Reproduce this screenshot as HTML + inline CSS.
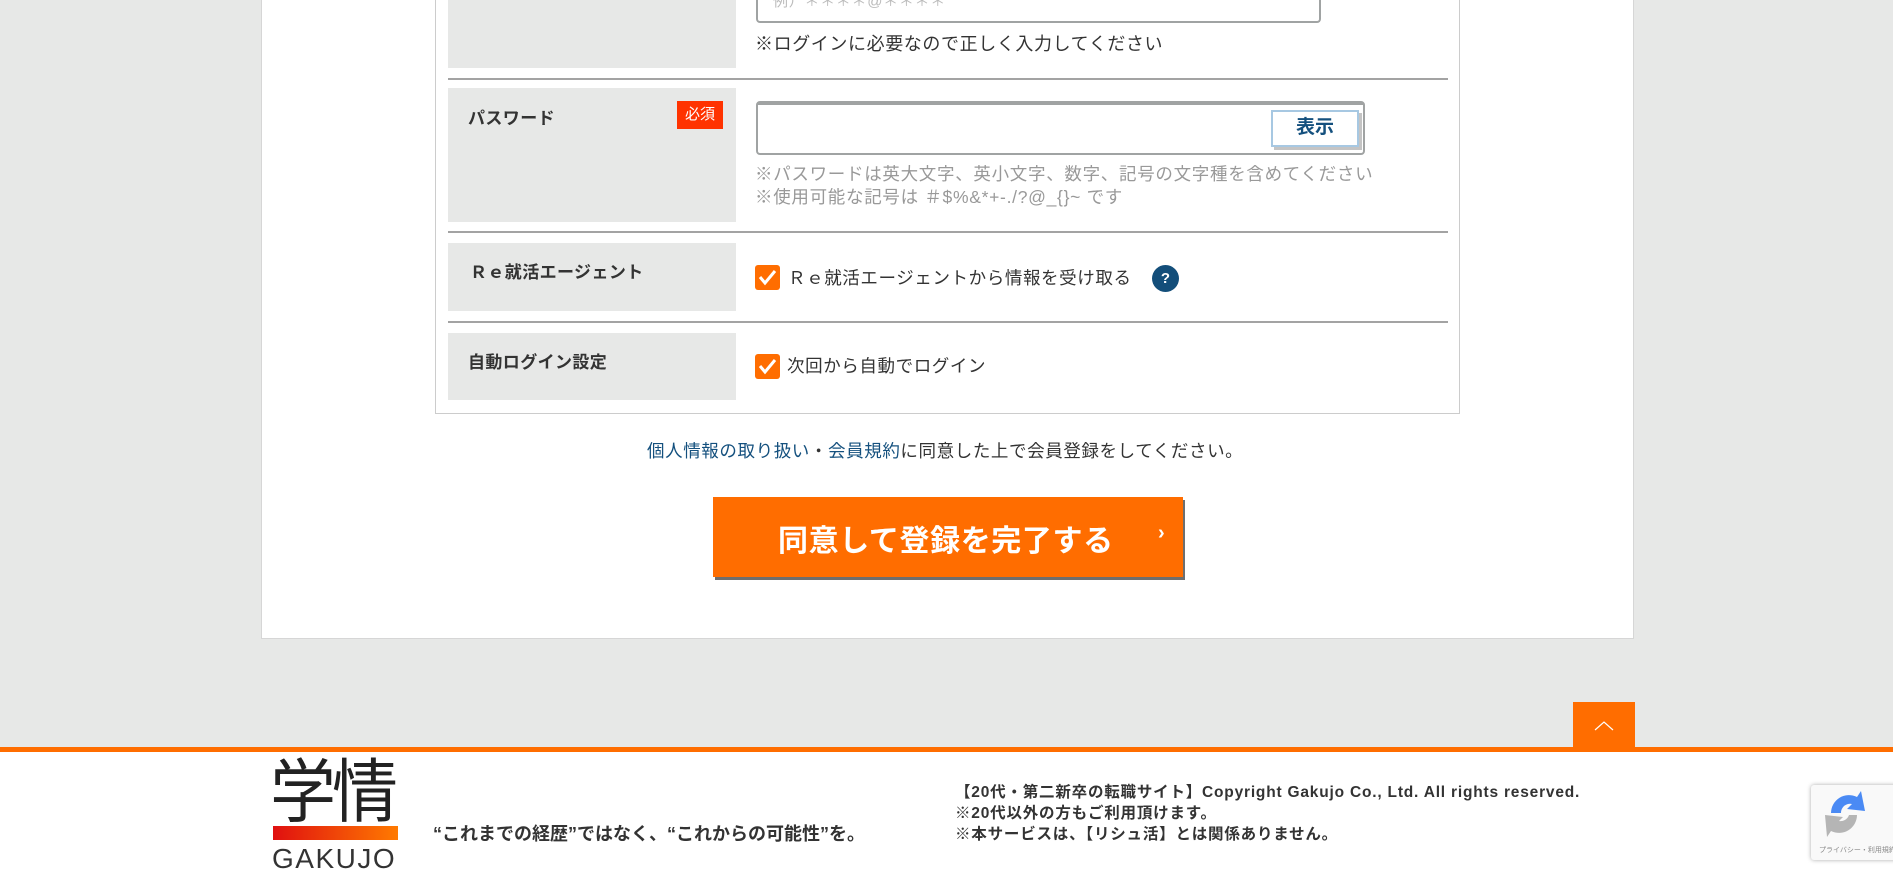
<!DOCTYPE html>
<html><head><meta charset="utf-8"><style>
*{margin:0;padding:0;box-sizing:border-box}
body{width:1893px;height:877px;overflow:hidden;background:#e7e8e7;font-family:"Liberation Sans","Noto Sans CJK JP",sans-serif;position:relative;color:#333}
.a{position:absolute}
.card{left:261px;top:-2px;width:1373px;height:641px;background:#fff;border:1px solid #d6d6d6;border-top:none}
.box{left:435px;top:-2px;width:1025px;height:416px;border:1px solid #ccc;border-top:none}
.lab{background:#e7e8e7;left:448px;width:288px}
.line{left:448px;width:1000px;height:2px;background:#a3a3a3}
.lt{font-size:17px;font-weight:bold;color:#333;letter-spacing:0.4px}
.t{font-size:18px;color:#333;white-space:nowrap;letter-spacing:0.6px}
.g{font-size:17.5px;color:#999;white-space:nowrap;letter-spacing:0.7px}
.cb{width:25px;height:25px;background:#ff6d00;border-radius:3px}
.cb svg{position:absolute;left:3px;top:4px}
</style></head><body>
<div class="a card"></div>
<div class="a box"></div>
<div class="a lab" style="top:0;height:68px"></div>
<div class="a" style="left:756px;top:-4px;width:565px;height:27px;border:2px solid #a0a3a3;border-top:none;border-radius:0 0 4px 4px"></div>
<div class="a g" style="left:773px;top:-10px;font-size:15px;color:#bbb">例）＊＊＊＊@＊＊＊＊</div>
<div class="a t" style="left:755px;top:30px">※ログインに必要なので正しく入力してください</div>
<div class="a line" style="top:78px"></div>

<div class="a lab" style="top:88px;height:134px"></div>
<div class="a lt" style="left:468px;top:104px">パスワード</div>
<div class="a" style="left:677px;top:101px;width:46px;height:28px;background:#ff3300;color:#fff;font-size:15px;text-align:center;line-height:28px">必須</div>
<div class="a" style="left:756px;top:101px;width:609px;height:54px;border:2px solid #a0a3a3;border-top-width:4px;border-radius:4px"></div>
<div class="a" style="left:1271px;top:110px;width:88px;height:37px;border:2px solid #a7c8e2;box-shadow:3px 3px 0 #c4c4c4;background:#fff;color:#14507e;font-weight:bold;font-size:19px;text-align:center;line-height:32px">表示</div>
<div class="a g" style="left:755px;top:161px">※パスワードは英大文字、英小文字、数字、記号の文字種を含めてください</div>
<div class="a g" style="left:755px;top:184px">※使用可能な記号は ＃$%&amp;*+-./?@_{}~ です</div>
<div class="a line" style="top:231px"></div>

<div class="a lab" style="top:243px;height:68px"></div>
<div class="a lt" style="left:470px;top:258px">Ｒｅ就活エージェント</div>
<div class="a cb" style="left:755px;top:265px"><svg width="19" height="17"><path d="M2 8 L7 14 L17 2" stroke="#fff" stroke-width="3" fill="none"/></svg></div>
<div class="a t" style="left:788px;top:265px;font-size:17.5px">Ｒｅ就活エージェントから情報を受け取る</div>
<div class="a" style="left:1152px;top:265px;width:27px;height:27px;border-radius:50%;background:#134e7a;color:#fff;font-size:15px;font-weight:bold;text-align:center;line-height:27px">?</div>
<div class="a line" style="top:321px"></div>

<div class="a lab" style="top:333px;height:67px"></div>
<div class="a lt" style="left:468px;top:348px">自動ログイン設定</div>
<div class="a cb" style="left:755px;top:354px"><svg width="19" height="17"><path d="M2 8 L7 14 L17 2" stroke="#fff" stroke-width="3" fill="none"/></svg></div>
<div class="a t" style="left:787px;top:353px;font-size:17.5px">次回から自動でログイン</div>

<div class="a t" style="left:647px;top:438px;font-size:17.5px"><span style="color:#14507e">個人情報の取り扱い</span>・<span style="color:#14507e">会員規約</span>に同意した上で会員登録をしてください。</div>

<div class="a" style="left:713px;top:497px;width:470px;height:80px;background:#ff6d00;box-shadow:2px 3px 0 #6e6e6e"></div>
<div class="a" style="left:778px;top:516px;color:#fff;font-weight:bold;font-size:30px;white-space:nowrap;letter-spacing:0.6px">同意して登録を完了する</div>
<div class="a" style="left:1158px;top:522px;color:#fff;font-weight:bold;font-size:20px">›</div>

<div class="a" style="left:1573px;top:702px;width:62px;height:48px;background:#ff6d00"><svg width="62" height="48"><path d="M22 28 L31 20 L40 28" stroke="#fff" stroke-width="1.2" fill="none"/></svg></div>
<div class="a" style="left:0;top:747px;width:1893px;height:130px;background:#fff;border-top:5px solid #ff6d00"></div>
<div class="a" style="left:270px;top:752px;font-size:66px;line-height:76px;color:#222;letter-spacing:-4px;transform:scaleY(1.05);transform-origin:top left">学情</div>
<div class="a" style="left:273px;top:826px;width:125px;height:14px;background:linear-gradient(90deg,#e01010,#ff7a00)"></div>
<div class="a" style="left:272px;top:843px;font-size:28px;color:#333;letter-spacing:1.5px">GAKUJO</div>
<div class="a" style="left:433px;top:820px;font-size:18px;font-weight:bold;color:#333;white-space:nowrap">“これまでの経歴”ではなく、“これからの可能性”を。</div>
<div class="a" style="left:955px;top:782px;font-size:15.5px;font-weight:bold;color:#333;line-height:21px;white-space:nowrap;letter-spacing:0.8px">【20代・第二新卒の転職サイト】Copyright Gakujo Co., Ltd. All rights reserved.<br>※20代以外の方もご利用頂けます。<br>※本サービスは、【リシュ活】とは関係ありません。</div>
<div class="a" style="left:1811px;top:785px;width:90px;height:75px;background:#f9f9f9;border-radius:3px;box-shadow:0 0 4px #aaa"><svg width="82" height="60"><path d="M20 28 A18 18 0 0 1 46 12 L50 6 L54 26 L36 24 L41 19 A9 9 0 0 0 30 28Z" fill="#4a8af4"/><path d="M46 30 A18 18 0 0 1 20 46 L16 52 L14 30 L32 32 L28 36 A9 9 0 0 0 38 30Z" fill="#b5b5b5"/></svg><div class="a" style="left:8px;top:60px;font-size:7px;color:#888;white-space:nowrap">プライバシー・利用規約</div></div>
</body></html>
